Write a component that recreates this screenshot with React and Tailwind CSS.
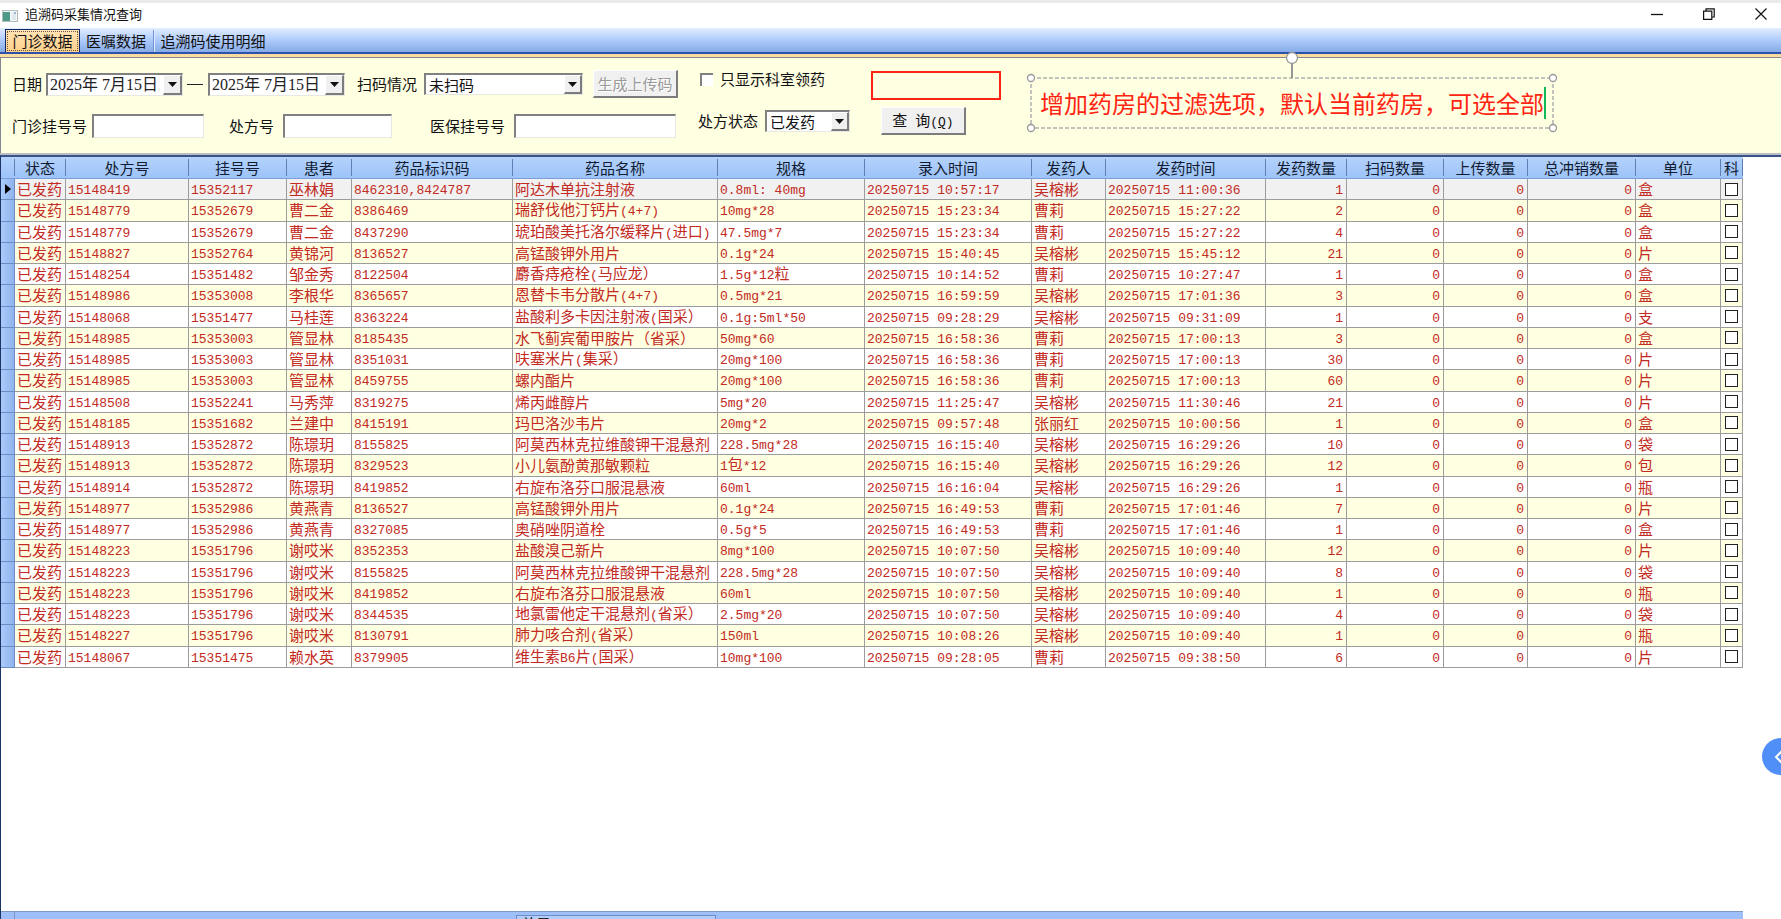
import React from "react";

const COLUMNS = [
  { title: "状态", width: "w-[51px]" },
  { title: "处方号", width: "w-[123px]" },
  { title: "挂号号", width: "w-[98px]" },
  { title: "患者", width: "w-[65px]" },
  { title: "药品标识码", width: "w-[161px]" },
  { title: "药品名称", width: "w-[205px]" },
  { title: "规格", width: "w-[147px]" },
  { title: "录入时间", width: "w-[167px]" },
  { title: "发药人", width: "w-[74px]" },
  { title: "发药时间", width: "w-[160px]" },
  { title: "发药数量", width: "w-[81px]", number: true },
  { title: "扫码数量", width: "w-[97px]", number: true },
  { title: "上传数量", width: "w-[84px]", number: true },
  { title: "总冲销数量", width: "w-[108px]", number: true },
  { title: "单位", width: "w-[85px]" },
];

const DAY = "20250715 ";

const ROWS = [
  ["15148419", "15352117", "巫林娟", "8462310,8424787", "阿达木单抗注射液", "0.8ml: 40mg", "10:57:17", "吴榕彬", "11:00:36", 1, "盒"],
  ["15148779", "15352679", "曹二金", "8386469", "瑞舒伐他汀钙片(4+7)", "10mg*28", "15:23:34", "曹莉", "15:27:22", 2, "盒"],
  ["15148779", "15352679", "曹二金", "8437290", "琥珀酸美托洛尔缓释片(进口)", "47.5mg*7", "15:23:34", "曹莉", "15:27:22", 4, "盒"],
  ["15148827", "15352764", "黄锦河", "8136527", "高锰酸钾外用片", "0.1g*24", "15:40:45", "吴榕彬", "15:45:12", 21, "片"],
  ["15148254", "15351482", "邹金秀", "8122504", "麝香痔疮栓(马应龙）", "1.5g*12粒", "10:14:52", "曹莉", "10:27:47", 1, "盒"],
  ["15148986", "15353008", "李根华", "8365657", "恩替卡韦分散片(4+7)", "0.5mg*21", "16:59:59", "吴榕彬", "17:01:36", 3, "盒"],
  ["15148068", "15351477", "马桂莲", "8363224", "盐酸利多卡因注射液(国采）", "0.1g:5ml*50", "09:28:29", "吴榕彬", "09:31:09", 1, "支"],
  ["15148985", "15353003", "管显林", "8185435", "水飞蓟宾葡甲胺片（省采）", "50mg*60", "16:58:36", "曹莉", "17:00:13", 3, "盒"],
  ["15148985", "15353003", "管显林", "8351031", "呋塞米片(集采）", "20mg*100", "16:58:36", "曹莉", "17:00:13", 30, "片"],
  ["15148985", "15353003", "管显林", "8459755", "螺内酯片", "20mg*100", "16:58:36", "曹莉", "17:00:13", 60, "片"],
  ["15148508", "15352241", "马秀萍", "8319275", "烯丙雌醇片", "5mg*20", "11:25:47", "吴榕彬", "11:30:46", 21, "片"],
  ["15148185", "15351682", "兰建中", "8415191", "玛巴洛沙韦片", "20mg*2", "09:57:48", "张丽红", "10:00:56", 1, "盒"],
  ["15148913", "15352872", "陈璟玥", "8155825", "阿莫西林克拉维酸钾干混悬剂", "228.5mg*28", "16:15:40", "吴榕彬", "16:29:26", 10, "袋"],
  ["15148913", "15352872", "陈璟玥", "8329523", "小儿氨酚黄那敏颗粒", "1包*12", "16:15:40", "吴榕彬", "16:29:26", 12, "包"],
  ["15148914", "15352872", "陈璟玥", "8419852", "右旋布洛芬口服混悬液", "60ml", "16:16:04", "吴榕彬", "16:29:26", 1, "瓶"],
  ["15148977", "15352986", "黄燕青", "8136527", "高锰酸钾外用片", "0.1g*24", "16:49:53", "曹莉", "17:01:46", 7, "片"],
  ["15148977", "15352986", "黄燕青", "8327085", "奥硝唑阴道栓", "0.5g*5", "16:49:53", "曹莉", "17:01:46", 1, "盒"],
  ["15148223", "15351796", "谢哎米", "8352353", "盐酸溴己新片", "8mg*100", "10:07:50", "吴榕彬", "10:09:40", 12, "片"],
  ["15148223", "15351796", "谢哎米", "8155825", "阿莫西林克拉维酸钾干混悬剂", "228.5mg*28", "10:07:50", "吴榕彬", "10:09:40", 8, "袋"],
  ["15148223", "15351796", "谢哎米", "8419852", "右旋布洛芬口服混悬液", "60ml", "10:07:50", "吴榕彬", "10:09:40", 1, "瓶"],
  ["15148223", "15351796", "谢哎米", "8344535", "地氯雷他定干混悬剂(省采）", "2.5mg*20", "10:07:50", "吴榕彬", "10:09:40", 4, "袋"],
  ["15148227", "15351796", "谢哎米", "8130791", "肺力咳合剂(省采）", "150ml", "10:08:26", "吴榕彬", "10:09:40", 1, "瓶"],
  ["15148067", "15351475", "赖水英", "8379905", "维生素B6片(国采）", "10mg*100", "09:28:05", "曹莉", "09:38:50", 6, "片"],
].map(([rx, reg, patient, code, name, spec, entered, staff, issued, qty, unit]) => [
  "已发药", rx, reg, patient, code, name, spec, DAY + entered, staff, DAY + issued, qty, 0, 0, 0, unit,
]);

const MONO = "font-['Liberation_Mono',monospace] text-[13px] leading-4";
const SUNKEN = "border-t-2 border-l-2 border-r border-b border-t-[#808080] border-l-[#808080] border-r-[#e8e8e0] border-b-[#e8e8e0] bg-white";
const RAISED = "border-t border-l border-r-2 border-b-2 border-t-white border-l-white border-r-[#7c7c7c] border-b-[#7c7c7c] bg-[#f0f0f0]";

// Half-width runs are set in the fixed-pitch face, full-width ones in the CJK face.
function Mixed({ text }) {
  return String(text).split(/([\x20-\x7e]+)/).filter(Boolean).map((run, i) =>
    /^[\x20-\x7e]/.test(run) ? <span key={i} className={MONO}>{run}</span> : run
  );
}

function Arrow() {
  return (
    <svg width="9" height="5" viewBox="0 0 9 5" aria-hidden="true">
      <path d="M0 0h9L4.5 5z" fill="#111" />
    </svg>
  );
}

function DateBox({ id, label }) {
  return (
    <div className={`flex h-[23px] w-[137px] ${SUNKEN}`}>
      <input
        id={id}
        aria-label={label}
        defaultValue="2025年 7月15日"
        className="min-w-0 flex-1 pl-0.5 font-['Liberation_Serif','Noto_Sans_CJK_SC',serif] text-base leading-5 text-[#222] outline-none"
      />
      <button type="button" aria-label={`选择${label}`} className={`flex w-[19px] shrink-0 items-center justify-center ${RAISED}`}>
        <Arrow />
      </button>
    </div>
  );
}

function SelectBox({ id, value, width }) {
  return (
    <div className={`relative h-[22px] ${width} ${SUNKEN}`}>
      <select id={id} defaultValue={value} className="block h-full w-full appearance-none pl-[3px] leading-[19px] outline-none">
        <option>{value}</option>
      </select>
      <span className={`pointer-events-none absolute inset-y-0 right-0 flex w-[18px] items-center justify-center ${RAISED}`}>
        <Arrow />
      </span>
    </div>
  );
}

function TitleBar() {
  return (
    <header className="flex h-7 shrink-0 items-center border-t-[3px] border-[#ebebeb] bg-white pb-[3px] pl-0.5">
      <svg className="mt-1" width="16" height="12" viewBox="0 0 16 12" aria-hidden="true">
        <rect x="0.5" y="0.5" width="15" height="11" fill="#f3f6f6" stroke="#b4bcbc" />
        <rect x="1" y="2" width="7" height="9" fill="#4d9a86" />
        <rect x="10" y="3" width="4" height="7" fill="#dfe9f0" />
        <path d="M12 3h2" stroke="#5a7fc0" />
      </svg>
      <h1 className="ml-[7px] flex-1 text-[13px] leading-5 text-[#111]">追溯码采集情况查询</h1>
      <div className="flex items-center gap-6 pr-1.5">
        <button aria-label="最小化" className="flex h-5 w-7 items-center justify-center">
          <svg width="12" height="12" viewBox="0 0 12 12"><path d="M0 6.5h12" stroke="#111" strokeWidth="1.3" /></svg>
        </button>
        <button aria-label="还原" className="flex h-5 w-7 items-center justify-center">
          <svg width="12" height="12" viewBox="0 0 12 12" fill="none" stroke="#111" strokeWidth="1.2">
            <path d="M0.6 3.2h8.2v8.2H0.6zM3 3V0.8h8.2V9H9" />
          </svg>
        </button>
        <button aria-label="关闭" className="flex h-5 w-7 items-center justify-center">
          <svg width="12" height="12" viewBox="0 0 12 12"><path d="M0.5 0.5l11 11M11.5 0.5l-11 11" stroke="#111" strokeWidth="1.2" /></svg>
        </button>
      </div>
    </header>
  );
}

function Tabs() {
  return (
    <div role="tablist" className="flex h-[26px] shrink-0 items-end border-b-2 border-[#2c52ae] bg-gradient-to-b from-[#e2edff] via-[#aecbfb] to-[#86abe6] pl-[5px]">
      <button role="tab" aria-selected="true" className="h-[23px] w-[75px] border border-b-0 border-[#14286e] bg-gradient-to-b from-[#ffe3b4] to-[#ffd08a] p-px">
        <span className="flex h-full items-center justify-center border border-dotted border-[#6b5a3a]">门诊数据</span>
      </button>
      <button role="tab" aria-selected="false" className="mr-px h-[23px] w-[72px] pt-px text-center">医嘱数据</button>
      <span className="h-[22px] border-r border-l border-r-[#dfeaff] border-l-[#6f95d6]" />
      <button role="tab" aria-selected="false" className="h-[23px] w-[116px] pt-px text-center">追溯码使用明细</button>
    </div>
  );
}

function Filters() {
  return (
    <form onSubmit={(e) => e.preventDefault()} className="shrink-0 border-t-[3px] border-[#fbdca0] bg-[#b9bec4] pb-0.5 text-[#111]">
      <div className="flex flex-col gap-[14px] border-t border-l border-[#85888c] bg-[#ffffe1] pt-3 pb-[13px] pl-[11px]">
        <div className="flex h-7 items-center whitespace-nowrap">
          <label htmlFor="from" className="w-[34px]">日期</label>
          <DateBox id="from" label="开始日期" />
          <span className="mr-[5px] ml-1 h-px w-4 bg-[#222]" />
          <DateBox id="to" label="结束日期" />
          <label htmlFor="scan" className="ml-3 w-[67px]">扫码情况</label>
          <SelectBox id="scan" value="未扫码" width="w-[159px]" />
          <button type="button" disabled className={`ml-2.5 h-7 w-[85px] text-[#9a9a9a] [text-shadow:1px_1px_0_#fff] ${RAISED}`}>生成上传码</button>
          <label className="ml-[22px] flex items-center gap-[7px] pb-2.5">
            <input type="checkbox" className="h-[13px] w-[13px] appearance-none border-t-2 border-l-2 border-t-[#808080] border-l-[#808080] bg-white" />
            只显示科室领药
          </label>
        </div>
        <div className="flex h-7 items-center whitespace-nowrap">
          <label htmlFor="visit" className="w-20">门诊挂号号</label>
          <input id="visit" className={`h-6 w-[112px] outline-none ${SUNKEN}`} />
          <label htmlFor="rx" className="ml-[25px] w-[54px]">处方号</label>
          <input id="rx" className={`h-6 w-[109px] outline-none ${SUNKEN}`} />
          <label htmlFor="insurance" className="ml-[38px] w-[84px]">医保挂号号</label>
          <input id="insurance" className={`h-6 w-[162px] outline-none ${SUNKEN}`} />
          <div className="ml-[22px] flex items-center pb-2.5">
            <label htmlFor="status" className="w-[67px]">处方状态</label>
            <SelectBox id="status" value="已发药" width="w-[85px]" />
            <button className={`ml-[31px] h-7 w-[85px] ${RAISED}`}>
              查<span className={MONO}> </span>询<span className={MONO}>(<u>Q</u>)</span>
            </button>
          </div>
        </div>
      </div>
    </form>
  );
}

function rowColor(i) {
  if (i === 0) return "bg-[#f1f1f1]";
  return i % 2 ? "bg-[#ffffe1]" : "bg-white";
}

function DataGrid() {
  return (
    <table className="h-[511px] w-px table-fixed border-separate border-spacing-0">
      <colgroup>
        <col className="w-[14px]" />
        {COLUMNS.map((c) => <col key={c.title} className={c.width} />)}
        <col className="w-[22px]" />
      </colgroup>
      <thead>
        <tr className="h-[22px] text-[#111c33]">
          {["", ...COLUMNS.map((c) => c.title), "科"].map((title, i) => (
            <th key={i} scope="col" className="border-b border-[#7c9fdc] bg-gradient-to-b from-[#b4d2fc] to-[#9dc3f8] p-0 py-0.5 font-normal whitespace-nowrap">
              <span className="flex h-[17px] items-center justify-center border-r border-[#5f7fb5]">{title}</span>
            </th>
          ))}
        </tr>
      </thead>
      <tbody className="text-[#c22a22]">
        {ROWS.map((row, r) => (
          <tr key={r} className={rowColor(r)}>
            <th className="border-r border-b border-[#6c8cc4] bg-gradient-to-r from-[#aacbfb] to-[#8fb4ec] p-0 leading-4">
              {r === 0 && (
                <svg className="ml-1 block" width="6" height="10" viewBox="0 0 6 10" aria-label="当前行"><path d="M0 0l6 5-6 5z" fill="#000" /></svg>
              )}
            </th>
            {row.map((value, c) => (
              <td
                key={c}
                className={`overflow-x-clip border-r border-b border-[#9c9c9c] p-0 leading-[18px] whitespace-nowrap ${
                  COLUMNS[c].number ? "pr-[3px] text-right" : "pl-0.5"
                }`}
              >
                <Mixed text={value} />
              </td>
            ))}
            <td className="border-r border-b border-[#9c9c9c] p-0">
              <input type="checkbox" aria-label={`科室 ${row[1]}`} className="mx-auto block h-[13px] w-[13px] appearance-none border border-[#222] bg-white" />
            </td>
          </tr>
        ))}
      </tbody>
    </table>
  );
}

function Summary() {
  return (
    <footer className="flex h-2 w-[1742px] max-w-full shrink-0 overflow-hidden border-t border-[#7f98c4] bg-[#9fbffa]">
      <span className="w-[14px] shrink-0 border-r border-[#7f98c4]" />
      <span className="mt-[3px] ml-[501px] h-6 w-[200px] shrink-0 border border-[#6f8dc4] bg-[#b3cdfb] pl-1 leading-4 text-black">总量</span>
    </footer>
  );
}

function Annotation() {
  return (
    <>
      <div className="absolute top-[71px] left-[871px] h-[29px] w-[130px] border-2 border-[#ff2412]" />
      <div className="absolute top-[78px] left-[1031px] flex h-[50px] items-center pr-[7px] pl-[9px]">
        <svg className="absolute inset-0 h-full w-full overflow-visible" aria-hidden="true">
          <rect width="100%" height="100%" fill="none" stroke="#c4c2bc" strokeWidth="2" strokeDasharray="4 2" />
          <g stroke="#969696" fill="#fff">
            <svg x="50%" y="0" className="overflow-visible"><path d="M0 0v-16" strokeWidth="2" /><circle cy="-20" r="5.5" strokeWidth="1.3" /></svg>
            <circle cx="0" cy="0" r="3.5" strokeWidth="1.3" />
            <circle cx="100%" cy="0" r="3.5" strokeWidth="1.3" />
            <circle cx="0" cy="100%" r="3.5" strokeWidth="1.3" />
            <circle cx="100%" cy="100%" r="3.5" strokeWidth="1.3" />
          </g>
        </svg>
        <p className="relative border-r-2 border-[#12b85a] text-2xl leading-8 whitespace-nowrap text-[#ff2412]">增加药房的过滤选项，默认当前药房，可选全部</p>
      </div>
    </>
  );
}

export default function App() {
  return (
    <div className="relative flex h-screen flex-col overflow-hidden bg-white font-['Noto_Sans_CJK_SC',sans-serif] text-[15px] leading-5 text-[#111]">
      <TitleBar />
      <Tabs />
      <Filters />
      <main className="flex min-h-0 flex-1 flex-col border-t-2 border-l border-t-[#3b5488] border-l-[#1c3564]">
        <div className="min-h-0 flex-1 overflow-hidden">
          <DataGrid />
        </div>
        <Summary />
      </main>
      <Annotation />
      <button aria-label="展开侧栏" className="absolute top-[738px] right-[-18px] flex h-[37px] w-[37px] items-center rounded-full bg-[#4f8ff7] pl-3">
        <svg width="9" height="14" viewBox="0 0 9 14" fill="none" stroke="#fff" strokeWidth="2"><path d="M8 1L2 7l6 6" /></svg>
      </button>
    </div>
  );
}
